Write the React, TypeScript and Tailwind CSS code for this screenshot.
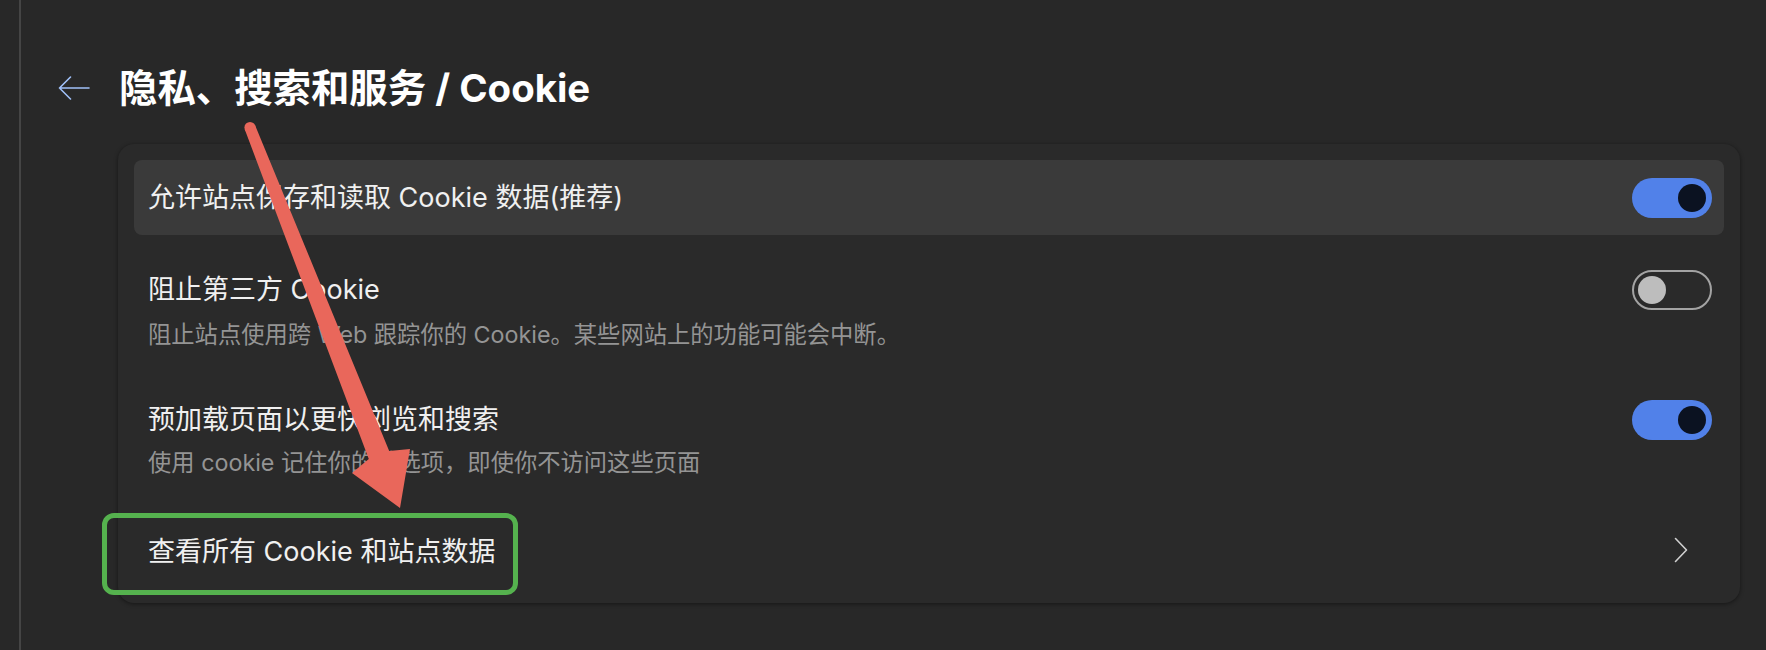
import type { ReactNode } from "react";

function Toggle({ on }: { on: boolean }) {
  if (on) {
    return (
      <div className="flex h-10 w-20 shrink-0 items-center justify-end rounded-full bg-[#5181e9] pr-1.5">
        <div className="h-7 w-7 rounded-full bg-[#0b1221]" />
      </div>
    );
  }
  return (
    <div className="flex h-10 w-20 shrink-0 items-center rounded-full border-2 border-[#a3a3a3] pl-1">
      <div className="h-7 w-7 rounded-full bg-[#bdbdbd]" />
    </div>
  );
}

function SettingRow({
  title,
  description,
  right,
  className,
}: {
  title: string;
  description: string;
  right: ReactNode;
  className: string;
}) {
  return (
    <div className={`pl-[14px] pr-3 ${className}`}>
      <div className="flex h-9 items-center justify-between">
        <span className="text-[27px] leading-9 text-[#f0f0f0]">{title}</span>
        {right}
      </div>
      <p className="mt-[var(--desc-gap)] text-[23.3px] leading-8 text-[#949494]">
        {description}
      </p>
    </div>
  );
}

function ArrowOverlay() {
  return (
    <svg
      className="pointer-events-none absolute inset-0"
      width="1766"
      height="650"
      viewBox="0 0 1766 650"
    >
      <circle cx="250" cy="127.5" r="5.6" fill="#e9675b" />
      <polygon
        points="244.8,129.6 368.8,459 352,473 400,508 410,449 389.2,451 255.2,125.4"
        fill="#e9675b"
      />
    </svg>
  );
}

export default function App() {
  return (
    <div className="relative flex h-[650px] w-full overflow-hidden bg-[#282828] font-['Inter','Noto_Sans_CJK_SC',sans-serif]">
      <div className="w-[21px] shrink-0 border-r-2 border-[#454545]" />

      <main className="flex-1 pl-[37px] pr-[26px] pt-[61px]">
        <header className="flex h-[54px] items-center">
          <svg width="32" height="24" viewBox="0 0 32 24" fill="none">
            <path
              d="M31 12H1.5M12.5 1 1.5 12l11 11"
              stroke="#a0c0f8"
              strokeWidth="1.6"
              strokeLinecap="round"
              strokeLinejoin="round"
            />
          </svg>
          <h1 className="ml-[29px] text-[38.4px] font-bold leading-none text-white">
            隐私、搜索和服务 / Cookie
          </h1>
        </header>

        <section className="ml-[60px] mt-[29px] rounded-2xl bg-[#2a2a2a] p-4 shadow-[0_1px_4px_rgba(0,0,0,0.45)]">
          <div className="flex h-[75px] items-center justify-between rounded-lg bg-[#3a3a3a] pl-[14px] pr-3">
            <span className="text-[27px] leading-9 text-[#f0f0f0]">
              允许站点保存和读取 Cookie 数据(推荐)
            </span>
            <Toggle on />
          </div>

          <SettingRow
            title="阻止第三方 Cookie"
            description="阻止站点使用跨 Web 跟踪你的 Cookie。某些网站上的功能可能会中断。"
            right={<Toggle on={false} />}
            className="pb-[13px] pt-[37px] [--desc-gap:11px]"
          />

          <SettingRow
            title="预加载页面以更快浏览和搜索"
            description="使用 cookie 记住你的首选项，即使你不访问这些页面"
            right={<Toggle on />}
            className="pb-4 pt-[38px] [--desc-gap:9px]"
          />

          <div className="flex h-[92px] items-start justify-between pb-[17px] pl-[14px] pr-[36px] pt-[39px]">
            <span className="text-[27px] leading-9 text-[#f0f0f0]">
              查看所有 Cookie 和站点数据
            </span>
            <svg width="14" height="26" viewBox="0 0 14 26" fill="none" className="mt-[3px]">
              <path
                d="M1.5 1.5 12.5 13 1.5 24.5"
                stroke="#d0d0d0"
                strokeWidth="1.6"
                strokeLinecap="round"
                strokeLinejoin="round"
              />
            </svg>
          </div>
        </section>
      </main>

      <ArrowOverlay />
      <div className="pointer-events-none absolute left-[102px] top-[513px] h-[82px] w-[416px] rounded-[12px] border-[5px] border-[#55b24e]" />
    </div>
  );
}
